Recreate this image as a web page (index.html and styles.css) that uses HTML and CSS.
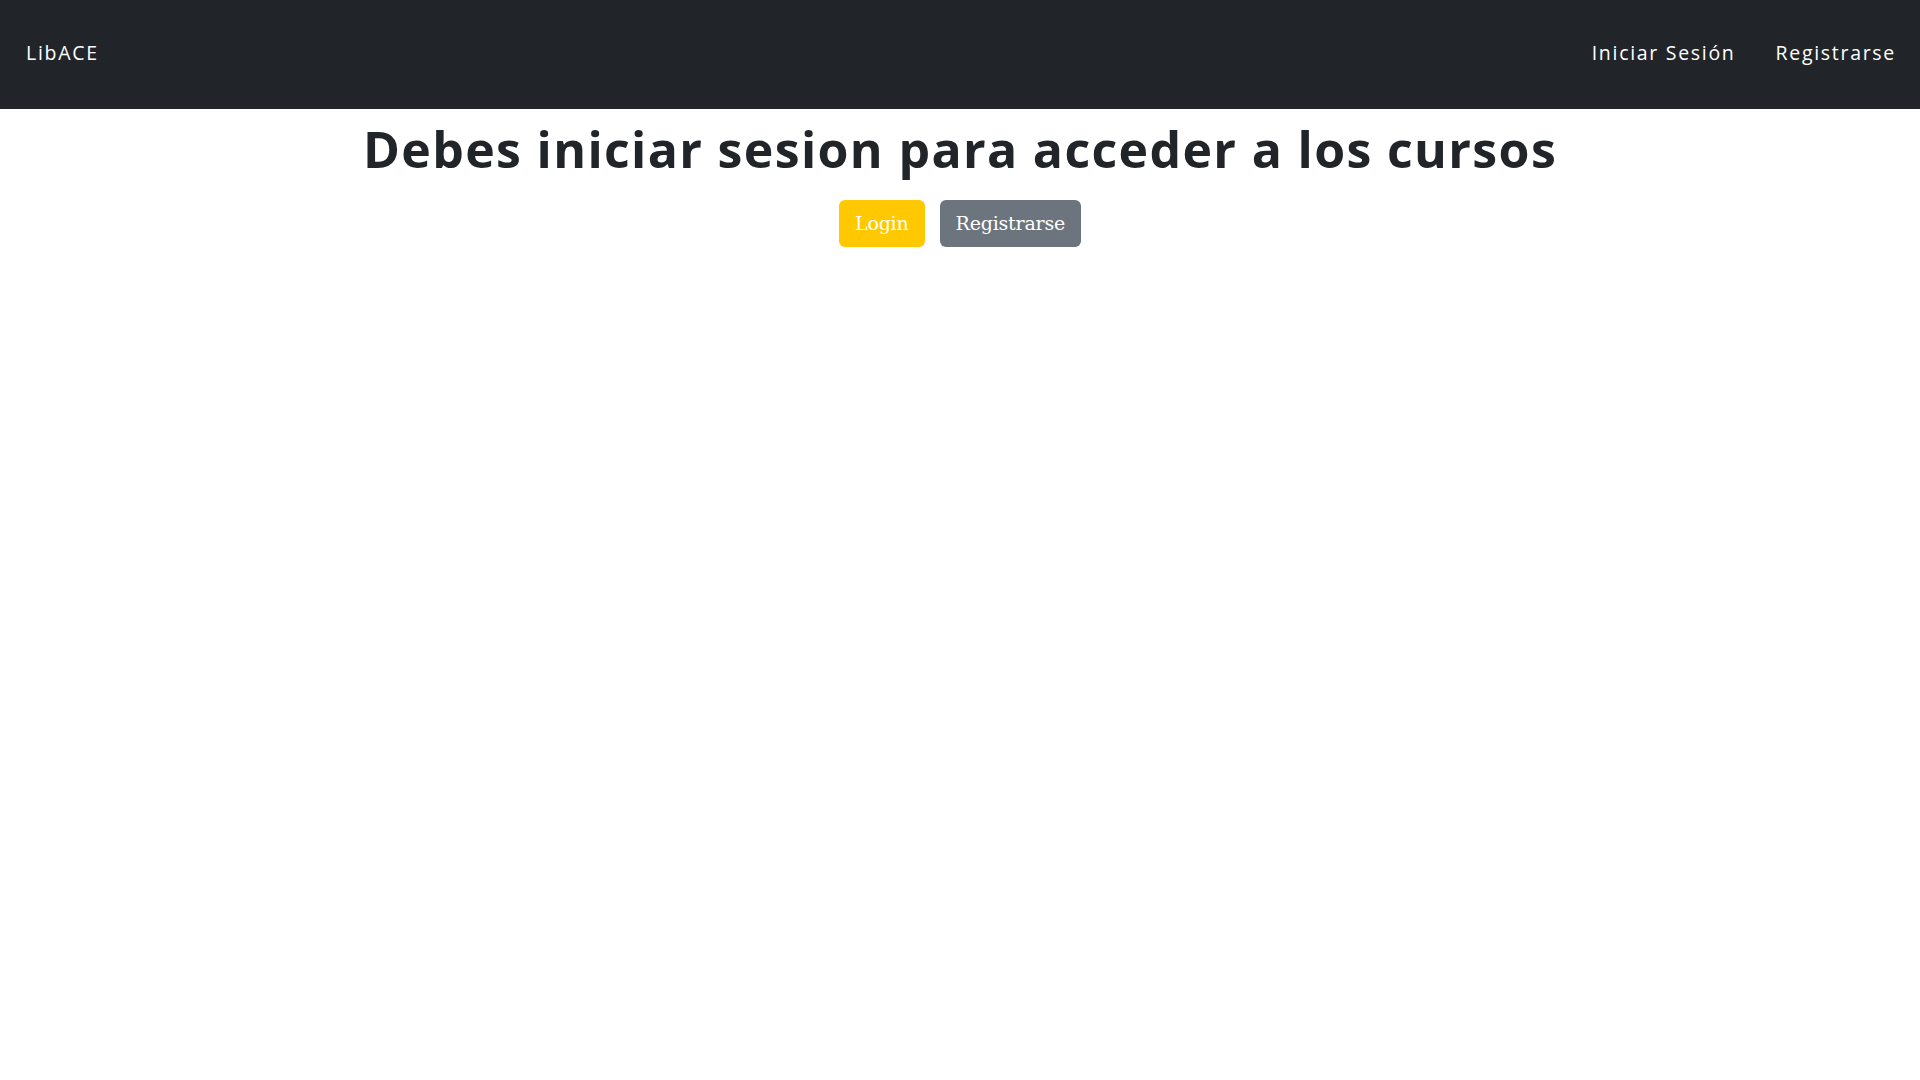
FILE: index.html
```html
<!DOCTYPE html>
<html lang="es">
<head>
<meta charset="utf-8">
<title>LibACE</title>
<link rel="stylesheet" href="styles.css">
</head>
<body>
<nav class="navbar">
  <a class="brand" href="#">LibACE</a>
  <ul class="nav-links">
    <li><a class="nav-link" href="#">Iniciar Sesión</a></li>
    <li><a class="nav-link" href="#">Registrarse</a></li>
  </ul>
</nav>
<main class="content">
  <h1 class="title">Debes iniciar sesion para acceder a los cursos</h1>
  <div class="actions">
    <a class="btn btn-warning" href="#">Login</a>
    <a class="btn btn-secondary" href="#">Registrarse</a>
  </div>
</main>
</body>
</html>
```
FILE: styles.css
```css
* { box-sizing: border-box; }
body {
  margin: 0;
  background: #fff;
  color: #212529;
  font-family: "Open Sans", "DejaVu Sans", sans-serif;
}
.navbar {
  height: 109px;
  background: #212529;
  display: flex;
  align-items: center;
  justify-content: space-between;
  padding: 0 24px 4px 26px;
}
.brand, .nav-link {
  color: #fff;
  text-decoration: none;
  font-family: "Open Sans", sans-serif;
  font-size: 19.5px;
  letter-spacing: 1.7px;
  line-height: 28px;
}
.nav-links {
  list-style: none;
  margin: 0;
  padding: 0;
  display: flex;
  gap: 40px;
}
.content {
  text-align: center;
}
.title {
  margin: 10px 0 0;
  font-family: "Open Sans", sans-serif;
  font-weight: 700;
  font-size: 50px;
  line-height: 60px;
  letter-spacing: 1.35px;
  color: #212529;
}
.actions {
  display: flex;
  justify-content: center;
  gap: 15px;
  margin-top: 21px;
}
.btn {
  display: inline-block;
  font-family: "DejaVu Serif", serif;
  font-size: 19px;
  line-height: 29px;
  letter-spacing: -0.2px;
  padding: 9px 16px;
  border-radius: 6px;
  color: #fff;
  text-decoration: none;
}
.btn-warning { background: #ffc800; }
.btn-secondary { background: #6c757d; }
```
